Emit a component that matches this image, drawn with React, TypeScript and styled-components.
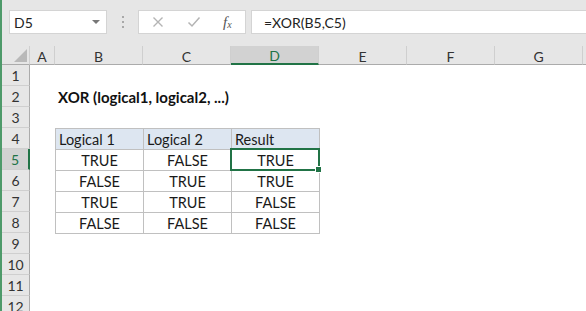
import styled, { createGlobalStyle } from "styled-components";

const GlobalStyle = createGlobalStyle`
  html, body {
    margin: 0;
    padding: 0;
    background: #ffffff;
    overflow: hidden;
  }
  body {
    font-family: "Lato", "Open Sans", sans-serif;
  }
`;

const GREEN = "#217346";

const columns = ["A", "B", "C", "D", "E", "F", "G"];
const rows = [1, 2, 3, 4, 5, 6, 7, 8, 9, 10, 11, 12];

const data = [
  ["TRUE", "FALSE", "TRUE"],
  ["FALSE", "TRUE", "TRUE"],
  ["TRUE", "TRUE", "FALSE"],
  ["FALSE", "FALSE", "FALSE"],
];

export default function App() {
  return (
    <Window>
      <GlobalStyle />
      <FormulaBar>
        <NameBox>
          <span>D5</span>
          <Caret />
        </NameBox>
        <Grip>
          <i />
          <i />
          <i />
        </Grip>
        <FunctionBox>
          <svg width="12" height="12" viewBox="0 0 12 12">
            <path d="M1.5 1.5 L10.5 10.5 M10.5 1.5 L1.5 10.5" stroke="#b4b4b4" strokeWidth="1.4" fill="none" />
          </svg>
          <svg width="14" height="12" viewBox="0 0 14 12">
            <path d="M1.5 6.5 L5 10 L12.5 1.5" stroke="#b4b4b4" strokeWidth="1.5" fill="none" />
          </svg>
          <Fx>
            f<sub>x</sub>
          </Fx>
        </FunctionBox>
        <FormulaInput>=XOR(B5,C5)</FormulaInput>
      </FormulaBar>

      <Sheet>
        <Corner>
          <svg width="13" height="13" viewBox="0 0 13 13">
            <path d="M13 0 L13 13 L0 13 Z" fill="#b9b9b9" />
          </svg>
        </Corner>
        {columns.map((c) => (
          <ColHeader key={c} $active={c === "D"}>
            {c}
          </ColHeader>
        ))}
        <ColFiller />

        {rows.map((r) => (
          <RowHeader key={r} style={{ gridRow: r + 1 }} $active={r === 5}>
            {r}
          </RowHeader>
        ))}

        <Title>XOR (logical1, logical2, ...)</Title>

        <DataTable>
          <colgroup>
            <col />
            <col />
            <col />
          </colgroup>
          <thead>
            <tr>
              <HeadCell>Logical 1</HeadCell>
              <HeadCell>Logical 2</HeadCell>
              <HeadCell>Result</HeadCell>
            </tr>
          </thead>
          <tbody>
            {data.map((row, i) => (
              <tr key={i}>
                {row.map((v, j) => (
                  <Cell key={j}>
                    {v}
                    {i === 0 && j === 2 && (
                      <Selection>
                        <Handle />
                      </Selection>
                    )}
                  </Cell>
                ))}
              </tr>
            ))}
          </tbody>
        </DataTable>
      </Sheet>
    </Window>
  );
}

const Window = styled.div`
  width: 586px;
  height: 311px;
  border-left: 2px solid #4e9a6a;
  box-sizing: border-box;
  background: #ffffff;
  overflow: hidden;
  color: #1d1d1d;
`;

const FormulaBar = styled.div`
  height: 46px;
  box-sizing: border-box;
  background: #e6e6e6;
  display: flex;
  align-items: flex-start;
  padding: 10px 0 0 7px;
`;

const NameBox = styled.div`
  width: 98px;
  height: 24px;
  box-sizing: border-box;
  background: #ffffff;
  border: 1px solid #d4d4d4;
  display: flex;
  align-items: center;
  justify-content: space-between;
  padding: 0 6px 0 4px;
  font-size: 14px;
  color: #222;
`;

const Caret = styled.span`
  width: 0;
  height: 0;
  border-left: 4px solid transparent;
  border-right: 4px solid transparent;
  border-top: 4px solid #777;
`;

const Grip = styled.div`
  width: 31px;
  height: 24px;
  display: flex;
  flex-direction: column;
  align-items: center;
  justify-content: center;
  gap: 3px;

  i {
    width: 2px;
    height: 2px;
    background: #a8a8a8;
  }
`;

const FunctionBox = styled.div`
  width: 108px;
  height: 24px;
  box-sizing: border-box;
  background: #ffffff;
  border: 1px solid #d4d4d4;
  display: flex;
  align-items: center;
  padding: 0 12px 0 13px;
  gap: 23px;
`;

const Fx = styled.span`
  font-family: "Liberation Serif", "DejaVu Serif", serif;
  font-style: italic;
  font-size: 15px;
  color: #555;
  margin-left: -1px;

  sub {
    font-size: 10px;
    vertical-align: -1px;
  }
`;

const FormulaInput = styled.div`
  flex: 1;
  height: 24px;
  margin-left: 5px;
  box-sizing: border-box;
  background: #ffffff;
  border: 1px solid #d4d4d4;
  border-right: none;
  display: flex;
  align-items: center;
  padding-left: 12px;
  font-size: 14px;
  color: #222;
`;

const Sheet = styled.div`
  display: grid;
  grid-template-columns: 28px 25px repeat(6, 88px) 1fr;
  grid-template-rows: 19px repeat(12, 21px);
  background: #ffffff;
`;

const Corner = styled.div`
  grid-column: 1;
  grid-row: 1;
  background: #e6e6e6;
  border-bottom: 1px solid #ababab;
  border-right: 1px solid #d0d0d0;
  display: flex;
  align-items: flex-end;
  justify-content: flex-end;
  padding: 0 2px 2px 0;
`;

const ColHeader = styled.div<{ $active?: boolean }>`
  grid-row: 1;
  background: ${(p) => (p.$active ? "#d2d2d2" : "#e6e6e6")};
  border-bottom: ${(p) => (p.$active ? `2px solid ${GREEN}` : "1px solid #ababab")};
  border-right: 1px solid #cfcfcf;
  display: flex;
  align-items: center;
  justify-content: center;
  font-size: 14px;
  color: ${(p) => (p.$active ? GREEN : "#333")};
  padding-top: 2px;
`;

const ColFiller = styled.div`
  grid-row: 1;
  background: #e6e6e6;
  border-bottom: 1px solid #ababab;
`;

const RowHeader = styled.div<{ $active?: boolean }>`
  grid-column: 1;
  background: ${(p) => (p.$active ? "#d2d2d2" : "#e6e6e6")};
  border-bottom: 1px solid #cfcfcf;
  border-right: ${(p) => (p.$active ? `2px solid ${GREEN}` : "1px solid #ababab")};
  display: flex;
  align-items: center;
  justify-content: center;
  font-size: 14px;
  color: ${(p) => (p.$active ? GREEN : "#333")};
`;

const Title = styled.div`
  grid-column: 3 / span 4;
  grid-row: 3;
  display: flex;
  align-items: center;
  padding-left: 3px;
  font-weight: 700;
  font-size: 15px;
  color: #111;
`;

const DataTable = styled.table`
  grid-column: 3 / 6;
  grid-row: 5 / 10;
  border-collapse: collapse;
  table-layout: fixed;
  width: 264px;
  height: 105px;
  font-size: 14.5px;
  color: #1a1a1a;

  col {
    width: 88px;
  }

  tr {
    height: 21px;
  }
`;

const HeadCell = styled.th`
  background: #dde6f1;
  border: 1px solid #c0c0c0;
  text-align: left;
  font-weight: 400;
  padding: 1px 0 0 3px;
  overflow: hidden;
  white-space: nowrap;
`;

const Cell = styled.td`
  position: relative;
  border: 1px solid #c0c0c0;
  text-align: center;
  padding: 1px 0 0;
`;

const Selection = styled.div`
  position: absolute;
  left: -2px;
  top: -2px;
  right: -1px;
  bottom: -1px;
  border: 2px solid ${GREEN};
  pointer-events: none;
`;

const Handle = styled.div`
  position: absolute;
  right: -4px;
  bottom: -4px;
  width: 5px;
  height: 5px;
  background: ${GREEN};
  border: 1px solid #ffffff;
`;
